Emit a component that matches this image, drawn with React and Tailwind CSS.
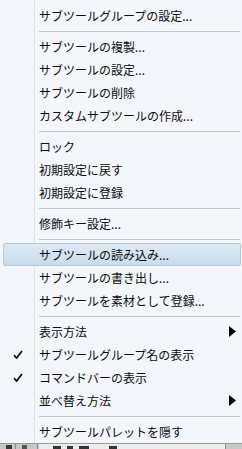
const FONT = { fontFamily: '"Noto Sans CJK JP", "Noto Sans", sans-serif' }

const items = [
  { label: 'サブツールグループの設定...' },
  'sep',
  { label: 'サブツールの複製...' },
  { label: 'サブツールの設定...' },
  { label: 'サブツールの削除' },
  { label: 'カスタムサブツールの作成...' },
  'sep',
  { label: 'ロック' },
  { label: '初期設定に戻す' },
  { label: '初期設定に登録' },
  'sep',
  { label: '修飾キー設定...' },
  'sep',
  { label: 'サブツールの読み込み...', active: true },
  { label: 'サブツールの書き出し...' },
  { label: 'サブツールを素材として登録...' },
  'sep',
  { label: '表示方法', arrow: true },
  { label: 'サブツールグループ名の表示', check: true },
  { label: 'コマンドバーの表示', check: true },
  { label: '並べ替え方法', arrow: true },
  'sep',
  { label: 'サブツールパレットを隠す' },
]

function Check() {
  return (
    <svg width="10" height="9" viewBox="0 0 10 9">
      <path d="M1 5.2 L3.6 8 L9 1" fill="none" stroke="#111" strokeWidth="1.8" strokeLinejoin="miter" />
    </svg>
  )
}

function Arrow() {
  return (
    <svg width="7" height="11" viewBox="0 0 7 11" className="mr-[6px]">
      <path d="M0 0 L7 5.5 L0 11 Z" fill="#000" />
    </svg>
  )
}

function Row({ item }) {
  if (item.active) {
    return (
      <div className="ml-[3px] mr-px flex h-[23px] items-center rounded-[2px] border border-[#b7c8d9] bg-gradient-to-b from-[#dde9f5] to-[#c9dcec]">
        <div className="w-[30px]" />
        <div className="flex h-full flex-1 items-center pl-[5px] text-[12px] text-[#0d0d0d]">{item.label}</div>
      </div>
    )
  }
  return (
    <div className="flex h-[23px] items-center">
      <div className="flex w-[34px] justify-center pl-[2px]">{item.check && <Check />}</div>
      <div className="flex h-full flex-1 items-center border-l border-[#dfe2e6] pl-[4px] text-[12px] text-[#0d0d0d]">
        <span className="flex-1">{item.label}</span>
        {item.arrow && <Arrow />}
      </div>
    </div>
  )
}

function Sep() {
  return (
    <div className="flex h-[8px]">
      <div className="w-[34px]" />
      <div className="flex flex-1 items-center border-l border-[#dfe2e6] pl-[4px] pr-[2px]">
        <div className="h-px w-full bg-[#c7c9cc]" />
      </div>
    </div>
  )
}

export default function App() {
  return (
    <div className="flex h-[449px] w-[242px] flex-col overflow-hidden bg-[#f3f6fb]" style={FONT}>
      <div className="flex h-[4px]">
        <div className="w-[34px]" />
        <div className="flex-1 border-l border-[#dfe2e6]" />
      </div>
      {items.map((it, i) => (it === 'sep' ? <Sep key={i} /> : <Row key={i} item={it} />))}
      <div className="flex h-[6px] items-end border-t border-[#9a9a9a] bg-[#c8c8c8]">
        <div className="ml-[6px] h-[4px] w-[6px] bg-[#3a3a3a]" />
        <div className="ml-[3px] h-full w-px bg-[#8a8a8a]" />
        <div className="ml-[6px] h-[4px] w-[5px] bg-[#555]" />
        <div className="ml-[10px] h-full w-px bg-[#8a8a8a]" />
        <div className="ml-px flex h-full w-[186px] items-end gap-[6px] bg-[#ececec] pl-[14px]">
          <div className="h-[3px] w-[8px] bg-[#333]" />
          <div className="h-[3px] w-[6px] bg-[#333]" />
          <div className="h-[3px] w-[10px] bg-[#333]" />
          <div className="ml-[14px] h-[3px] w-[8px] bg-[#333]" />
        </div>
        <div className="h-full w-px bg-[#8a8a8a]" />
      </div>
    </div>
  )
}
